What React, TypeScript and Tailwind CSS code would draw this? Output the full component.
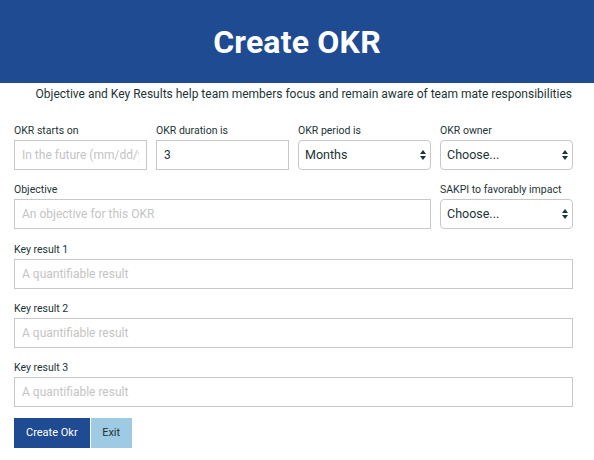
import React from "react";

const font = { fontFamily: "Roboto, 'Liberation Sans', sans-serif" };

function Label({ children }: { children: React.ReactNode }) {
  return <label className="block text-[10.5px] leading-[13px] text-[#1d3436] mb-[3px]">{children}</label>;
}

function TextInput({ placeholder, value }: { placeholder?: string; value?: string }) {
  return (
    <input
      type="text"
      defaultValue={value}
      placeholder={placeholder}
      className="block w-full h-[30px] border border-[#c8c8c8] px-[7px] text-[12px] text-[#1d3436] placeholder:text-[#c4c4c4] outline-none bg-white"
    />
  );
}

function Select({ value }: { value: string }) {
  return (
    <div className="relative">
      <select
        defaultValue={value}
        className="block w-full h-[30px] appearance-none rounded-[4px] border border-[#c8c8c8] bg-white pl-[6px] text-[12.5px] text-[#1d3436] outline-none"
      >
        <option>{value}</option>
      </select>
      {/* double arrow */}
      <svg
        className="absolute right-[5px] top-[10px] pointer-events-none"
        width="6"
        height="10"
        viewBox="0 0 6 10"
      >
        <path d="M3 0 L6 4 H0 Z" fill="#1d3436" />
        <path d="M3 10 L6 6 H0 Z" fill="#1d3436" />
      </svg>
    </div>
  );
}

export default function App() {
  return (
    <div className="min-h-[460px] bg-white" style={font}>
      <header className="h-[83px] bg-[#1f4b93] flex items-center justify-center">
        <h1 className="text-[32px] font-bold text-white leading-none tracking-[0.2px]">Create OKR</h1>
      </header>

      <div className="px-[14px] pr-[21px]">
        <p className="text-right text-[12px] leading-[14px] text-[#1d3436] mt-[4px] mr-[1px]">
          Objective and Key Results help team members focus and remain aware of team mate responsibilities
        </p>

        <div className="grid grid-cols-4 gap-x-[9px] mt-[23px]">
          <div>
            <Label>OKR starts on</Label>
            <TextInput placeholder="In the future (mm/dd/yyyy)" />
          </div>
          <div>
            <Label>OKR duration is</Label>
            <TextInput value="3" />
          </div>
          <div>
            <Label>OKR period is</Label>
            <Select value="Months" />
          </div>
          <div>
            <Label>OKR owner</Label>
            <Select value="Choose..." />
          </div>
        </div>

        <div className="grid grid-cols-4 gap-x-[9px] mt-[13px]">
          <div className="col-span-3">
            <Label>Objective</Label>
            <TextInput placeholder="An objective for this OKR" />
          </div>
          <div>
            <Label>SAKPI to favorably impact</Label>
            <Select value="Choose..." />
          </div>
        </div>

        <div className="mt-[14px]">
          <Label>Key result 1</Label>
          <TextInput placeholder="A quantifiable result" />
        </div>
        <div className="mt-[13px]">
          <Label>Key result 2</Label>
          <TextInput placeholder="A quantifiable result" />
        </div>
        <div className="mt-[13px]">
          <Label>Key result 3</Label>
          <TextInput placeholder="A quantifiable result" />
        </div>

        <div className="flex gap-[1px] mt-[11px]">
          <button className="h-[30px] px-[12px] bg-[#1f4b93] text-white text-[11px]">Create Okr</button>
          <button className="h-[30px] w-[41px] bg-[#9ecae3] text-[#1d3436] text-[11px]">Exit</button>
        </div>
      </div>
    </div>
  );
}
